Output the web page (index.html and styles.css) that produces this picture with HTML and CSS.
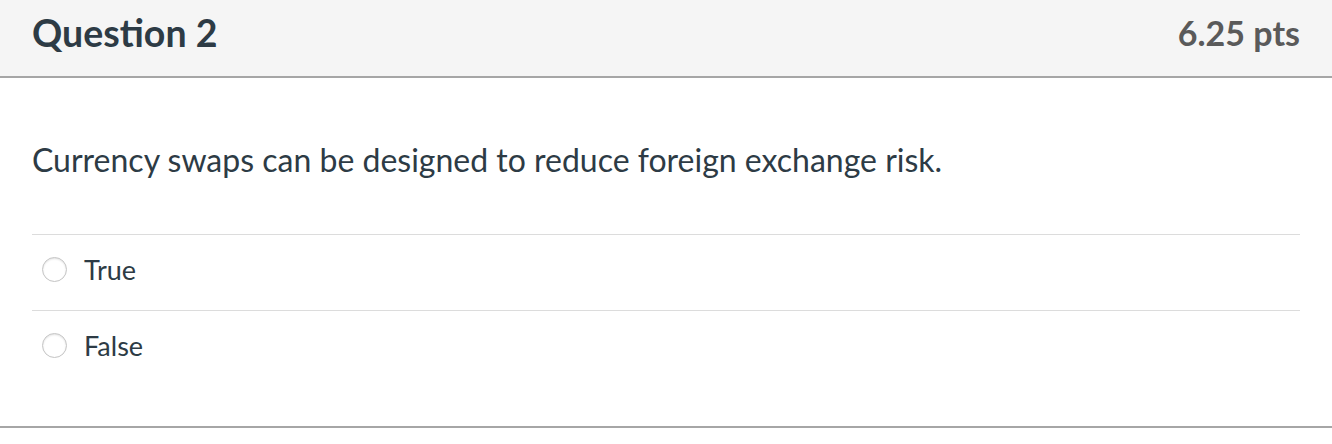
FILE: index.html
```html
<!DOCTYPE html>
<html>
<head>
<meta charset="utf-8">
<link rel="stylesheet" href="styles.css">
</head>
<body>
<div class="question">
  <div class="header">
    <span class="title">Question 2</span>
    <span class="points">6.25 pts</span>
  </div>
  <div class="content">
    <div class="text">Currency swaps can be designed to reduce foreign exchange risk.</div>
    <div class="answers">
      <label class="answer"><span class="radio"></span><span class="label">True</span></label>
      <label class="answer"><span class="radio"></span><span class="label">False</span></label>
    </div>
  </div>
</div>
</body>
</html>
```
FILE: styles.css
```css
html, body {
  margin: 0;
  padding: 0;
  background: #fff;
}
body {
  font-family: Lato, "Open Sans", sans-serif;
  color: #2d3b45;
}
.question {
  border-bottom: 2px solid #a6a6a6;
  width: 1332px;
}
.header {
  background: #f5f5f5;
  border-bottom: 2px solid #a6a6a6;
  padding: 0 32px 12px;
  display: flex;
  justify-content: space-between;
  align-items: center;
  box-sizing: border-box;
  height: 78px;
}
.title {
  font-size: 37.5px;
  font-weight: bold;
  color: #2d3b45;
}
.points {
  font-size: 34px;
  font-weight: bold;
  color: #5a5a5a;
}
.content {
  padding: 0 32px 40px;
}
.text {
  font-size: 32px;
  height: 156px;
  padding-top: 62px;
  box-sizing: border-box;
}
.answers {
  display: flex;
  flex-direction: column;
}
.answer {
  display: flex;
  align-items: center;
  border-top: 1px solid #dcdcdc;
  padding-left: 10px;
  padding-bottom: 7px;
  box-sizing: border-box;
  height: 76px;
}
.radio {
  width: 23px;
  height: 23px;
  border-radius: 50%;
  border: 1px solid #c4c4c4;
  background: #fff;
  box-shadow: inset 0 1px 2px rgba(0,0,0,0.12);
  margin-right: 17px;
}
.label {
  font-size: 27px;
}
```
